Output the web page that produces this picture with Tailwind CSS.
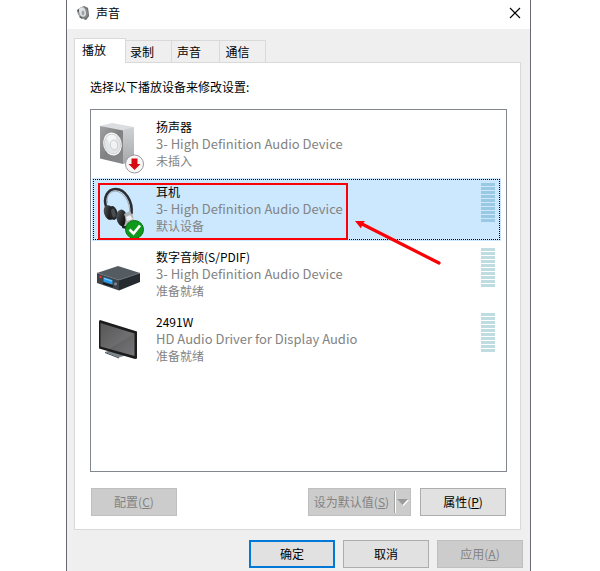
<!DOCTYPE html>
<html lang="zh-CN">
<head>
<meta charset="utf-8">
<meta name="viewport" content="width=device-width, initial-scale=1">
<title>声音</title>
<script src="https://cdn.jsdelivr.net/npm/@tailwindcss/browser@4"></script>
</head>
<body class="bg-white overflow-hidden text-black text-[12px] leading-[17px] font-['Noto_Sans_CJK_SC',sans-serif]">
<main class="relative ml-[66px] mr-[69px] min-h-screen border-x border-[#6a6b70] bg-[#efefef] flex flex-col">
  <header class="h-[29px] shrink-0 bg-white flex items-center pl-2 pr-[9px] pb-[3px]">
    <svg class="size-4" viewBox="0 0 16 16" aria-hidden="true">
      <path d="M3 4 9 1l4 2 1 8-3 4-3-1-5-4z" fill="#a9adae"/>
      <path d="m9 1 4 2 1 8-3 4-2-1z" fill="#6b7072"/>
      <ellipse cx="8.500" cy="7.500" rx="4.500" ry="6" transform="rotate(-15 8.500 7.500)" fill="#85898a"/>
      <ellipse cx="7.500" cy="7" rx="3.300" ry="4.800" transform="rotate(-15 7.500 7)" fill="#dfe3e3"/>
      <ellipse cx="8" cy="8" rx="1.500" ry="2.400" fill="#9fa5a6"/>
      <path d="m2 5 2-1v2L3 9zM5 11l3 2-1 1-3-2z" fill="#555b5c"/>
    </svg>
    <h1 class="ml-[5px] flex-1 pb-0.5">声音</h1>
    <button type="button" aria-label="关闭" class="size-3 flex items-center justify-center">
      <svg class="size-3" viewBox="0 0 12 12" fill="none" stroke="#000" stroke-width="1.1" aria-hidden="true"><path d="M1 1l10 10M11 1 1 11"/></svg>
    </button>
  </header>

  <div class="px-[7px] pr-[9px] pt-[9px]">
    <div role="tablist" class="flex items-end h-[24px]">
      <button type="button" role="tab" aria-selected="true" class="relative z-10 h-[25px] w-[52px] -mb-px shrink-0 bg-white border border-b-0 border-[#d9d9d9] pr-3 pb-[4px]">播放</button>
      <button type="button" role="tab" class="h-[22px] w-[46px] border-t border-r border-[#d9d9d9] pr-[13px]">录制</button>
      <button type="button" role="tab" class="h-[22px] w-[48px] border-t border-r border-[#d9d9d9] pr-[13px]">声音</button>
      <button type="button" role="tab" class="h-[22px] w-[46px] border-t border-r border-[#d9d9d9] pr-[10px]">通信</button>
    </div>

    <section role="tabpanel" class="border border-[#d9d9d9] bg-white px-[15px] pr-[13px] pt-[15px] pb-[13px]">
      <p class="mb-[14px]">选择以下播放设备来修改设置:</p>

      <ul role="listbox" aria-label="播放设备" class="h-[363px] border border-[#828790] pl-px pr-[5px] pt-[3px] flex flex-col gap-[2px]">
        <li role="option" class="h-[63px] flex items-start pl-[5px] pr-[6px] pt-[5px]">
          <svg class="size-[52px] shrink-0 overflow-visible" viewBox="0 0 52 52" aria-hidden="true">
            <defs>
              <linearGradient id="side" x2="0" y2="1"><stop stop-color="#d0d1d4"/><stop offset="1" stop-color="#a6a8ab"/></linearGradient>
              <linearGradient id="front" x2="1" y2="1"><stop stop-color="#a0a2a4"/><stop offset=".5" stop-color="#7f8183"/><stop offset="1" stop-color="#86888a"/></linearGradient>
            </defs>
            <path d="M3 8 15 5l22 4-11 5z" fill="#dcdde0"/>
            <path d="m26 12 11-3v33l-11 4z" fill="url(#side)"/>
            <path d="m3 8 23 4.500V46L3 40.500z" fill="url(#front)"/>
            <ellipse cx="15.500" cy="26" rx="9.200" ry="11.500" transform="rotate(-14 15.500 26)" fill="#fafafa"/>
            <ellipse cx="15.500" cy="26" rx="8" ry="10" transform="rotate(-14 15.500 26)" fill="#e3e6e8" stroke="#c8cbcd" stroke-width=".7"/>
            <path d="M10 20c2-4 7-4 9-1l-1 4-5 4z" fill="#f5f6f6"/>
            <ellipse cx="17" cy="27" rx="3.700" ry="5" transform="rotate(-14 17 27)" fill="#f0f2f3" stroke="#bfc5c9" stroke-width=".7"/>
            <circle cx="37.500" cy="46" r="9" fill="#f8f8f8" stroke="#999"/>
            <path d="M34.500 40.500h6V46h3l-6 6-6-6h3z" fill="#d60b12"/>
          </svg>
          <div class="ml-[7px] flex-1">
            <p>扬声器</p>
            <p class="text-[13px] leading-[17px] text-[#838383]">3- High Definition Audio Device</p>
            <p class="text-[#838383]">未插入</p>
          </div>
        </li>

        <li role="option" aria-selected="true" class="relative h-[63px] flex items-start pl-[5px] pr-[6px] pt-[5px] bg-[#cce8ff]">
          <span class="absolute inset-px border border-dotted border-black"></span>
          <span class="absolute left-[6px] top-[5px] w-[250px] h-[57px] border-2 border-[#fb0007] z-10"></span>
          <svg class="absolute left-[262px] top-[40px] w-[88px] h-[48px] z-10" viewBox="0 0 88 48" aria-hidden="true">
            <path d="m8 6 77 39" stroke="#fb0007" stroke-width="3.200" stroke-linecap="round"/>
            <path d="M1 3h10L8.500 6 7 10.500z" fill="#fb0007"/>
          </svg>
          <svg class="size-[52px] shrink-0 overflow-visible" viewBox="0 0 52 52" aria-hidden="true">
            <defs><linearGradient id="cup" x2="1" y2="1"><stop stop-color="#606366"/><stop offset=".6" stop-color="#1b1d1f"/><stop offset="1" stop-color="#000"/></linearGradient></defs>
            <path d="M9.500 25C5.500 14 11 6 18.500 6 28 6 36 18 34.500 31" fill="none" stroke="#2b2d30" stroke-width="2.600"/>
            <path d="M10.500 20C9 13 13 8 18.500 8.200 26 8.500 33 18 32.800 29" fill="none" stroke="#90979b" stroke-width=".8"/>
            <ellipse cx="12" cy="29.500" rx="5" ry="7.500" transform="rotate(-18 12 29.500)" fill="url(#cup)"/>
            <ellipse cx="16" cy="30" rx="4.500" ry="7" transform="rotate(-14 16 30)" fill="#242629"/>
            <ellipse cx="16.500" cy="30" rx="2" ry="4.500" transform="rotate(-14 16.500 30)" fill="#4a4d50"/>
            <ellipse cx="25" cy="35" rx="5.500" ry="8.500" transform="rotate(-10 25 35)" fill="url(#cup)"/>
            <path d="m27 31 6-3 3 5 1 7-7 4-3-1c2-4 2-8 0-12z" fill="#aeb3b6"/>
            <path d="m29 34 4-2 3 4-6 2z" fill="#edf0f1"/>
            <path d="M25 43h5l-1 3-4-1z" fill="#25282a"/>
            <circle cx="37.500" cy="46.500" r="9" fill="#0f991c" stroke="#08730e"/>
            <path d="m32.500 46.500 4 4 6.500-8" fill="none" stroke="#fff" stroke-width="2.600"/>
          </svg>
          <div class="ml-[7px] flex-1">
            <p>耳机</p>
            <p class="text-[13px] leading-[17px] text-[#838383]">3- High Definition Audio Device</p>
            <p class="text-[#838383]">默认设备</p>
          </div>
          <div class="w-[14px] h-[39px] bg-[repeating-linear-gradient(#9acae3_0_3px,transparent_3px_4px)]"></div>
        </li>

        <li role="option" class="h-[63px] flex items-start pl-[5px] pr-[6px] pt-[5px]">
          <svg class="size-[52px] shrink-0" viewBox="0 0 52 52" aria-hidden="true">
            <path d="m0 25 21-7 22 7-21 7z" fill="#555c61"/>
            <path d="m0 25 22 7v10.500L0 35z" fill="#3c4349"/>
            <path d="m22 32 21-7v9l-21 8.500z" fill="#252b30"/>
            <path d="m0 25 22 7 21-7" fill="none" stroke="#747b80" stroke-width=".6"/>
            <path d="m6.500 29 9 3v4.500l-9-3z" fill="#2a9df0"/>
            <path d="m7 30 8 2.600v1L7 31z" fill="#8bd0ff"/>
            <circle cx="3.500" cy="29" r="1.200" fill="#ed3b31"/>
            <path d="m6 34.500 10 3V39L6 36z" fill="#111416"/>
            <circle cx="18.500" cy="36" r="1.400" fill="#888f94"/>
          </svg>
          <div class="ml-[7px] flex-1">
            <p>数字音频(S/PDIF)</p>
            <p class="text-[13px] leading-[17px] text-[#838383]">3- High Definition Audio Device</p>
            <p class="text-[#838383]">准备就绪</p>
          </div>
          <div class="w-[14px] h-[39px] bg-[repeating-linear-gradient(#c0dce3_0_3px,transparent_3px_4px)]"></div>
        </li>

        <li role="option" class="h-[63px] flex items-start pl-[5px] pr-[6px] pt-[5px]">
          <svg class="size-[52px] shrink-0" viewBox="0 0 52 52" aria-hidden="true">
            <defs><linearGradient id="screen" x2="1" y2="1"><stop stop-color="#4a4a4b"/><stop offset="1" stop-color="#777779"/></linearGradient></defs>
            <path d="m15 35 9 2v5l-9-2z" fill="#50565b"/>
            <path d="m8 39 6-2 14 5.500-6 2z" fill="#7d858b"/>
            <path d="m8 39 14 5.500v1L8 40z" fill="#3e4347"/>
            <path d="m2 8 1-1 37 11.500v27l-2 .5L2 35.500z" fill="#1c1c1d"/>
            <path d="m3.500 10 34 10.500V43l-34-9.500z" fill="url(#screen)"/>
            <path d="m3.500 10 34 10.500L12 36l-8.500-2.500z" fill="#fff" opacity=".07"/>
          </svg>
          <div class="ml-[7px] flex-1">
            <p>2491W</p>
            <p class="text-[13px] leading-[17px] text-[#838383]">HD Audio Driver for Display Audio</p>
            <p class="text-[#838383]">准备就绪</p>
          </div>
          <div class="w-[14px] h-[39px] bg-[repeating-linear-gradient(#c0dce3_0_3px,transparent_3px_4px)]"></div>
        </li>
      </ul>

      <div class="mt-4 flex px-px">
        <button type="button" disabled class="h-7 w-[86px] pb-0.5 border border-[#bfbfbf] bg-[#cccccc] text-[#838383]">配置(<u>C</u>)</button>
        <div class="ml-auto flex h-7 w-[103px] border border-[#bfbfbf] bg-[#cccccc] text-[#838383]">
          <button type="button" disabled class="flex-1 pb-0.5 whitespace-nowrap">设为默认值(<u>S</u>)</button>
          <button type="button" disabled aria-label="更多选项" class="w-4 my-[2px] border-l border-[#a0a0a0] flex items-center justify-center shadow-[inset_1px_0_0_#fff]">
            <svg class="w-3 h-[7px]" viewBox="0 0 12 7" aria-hidden="true"><path d="M1 1h11L6.500 7z" fill="#fff"/><path d="M0 0h11L5.500 6z" fill="#9a9a9a"/></svg>
          </button>
        </div>
        <button type="button" class="ml-[9px] h-7 w-[86px] pb-0.5 border border-[#adadad] bg-[#e1e1e1]">属性(<u>P</u>)</button>
      </div>
    </section>
  </div>

  <footer class="flex justify-end gap-2 pt-[10px] pr-[7px] pb-[3px]">
    <button type="button" class="h-7 w-[86px] pb-0.5 border-2 border-[#0078d7] bg-[#e1e1e1]">确定</button>
    <button type="button" class="h-7 w-[86px] pb-0.5 border border-[#adadad] bg-[#e1e1e1]">取消</button>
    <button type="button" disabled class="h-7 w-[86px] pb-0.5 border border-[#bfbfbf] bg-[#cccccc] text-[#838383]">应用(<u>A</u>)</button>
  </footer>
</main>
</body>
</html>
